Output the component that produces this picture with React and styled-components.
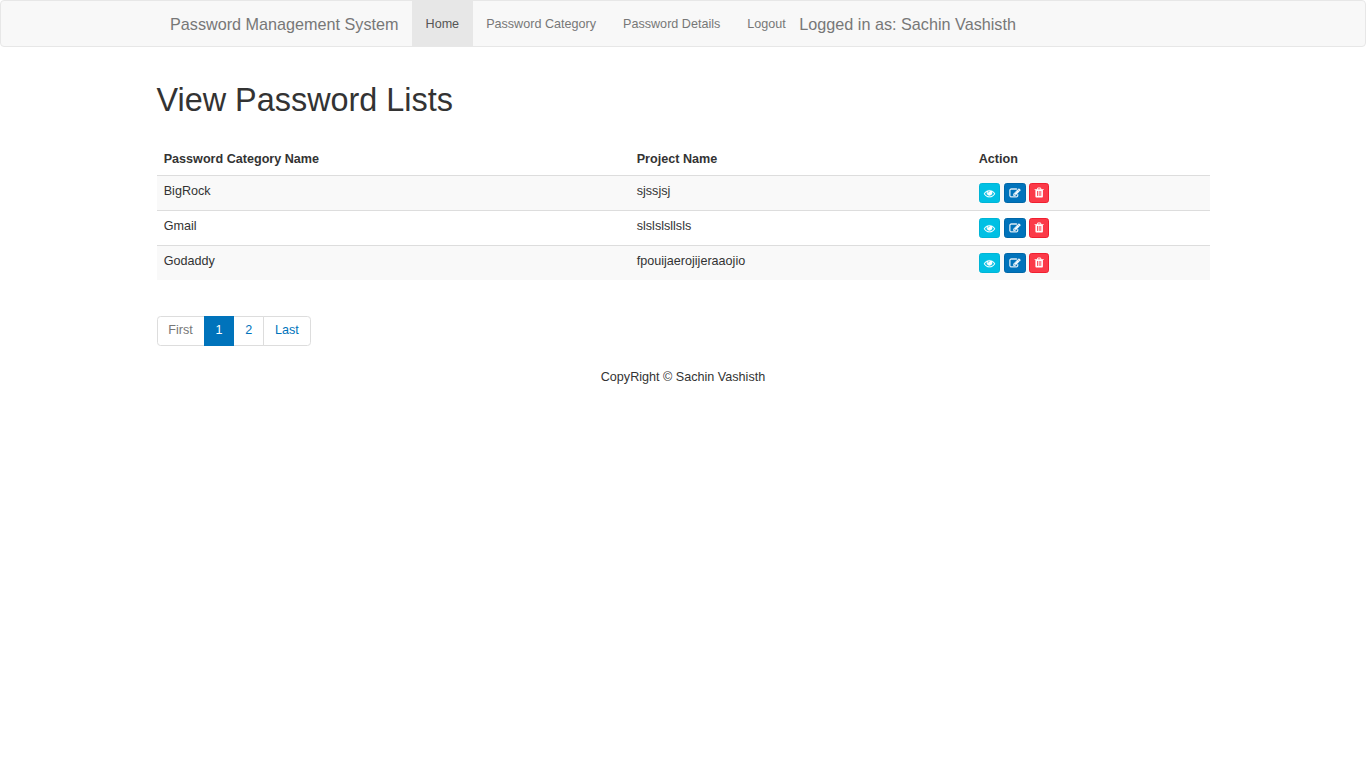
import React from 'react';
import styled, { createGlobalStyle } from 'styled-components';

const GlobalStyle = createGlobalStyle`
  *, *::before, *::after { box-sizing: border-box; }
  body {
    margin: 0;
    background: #fff;
    color: #333;
    font: 12.6px/18px "Liberation Sans", Arial, sans-serif;
  }
`;

const Navbar = styled.nav`
  height: 47px;
  background: #f8f8f8;
  border: 1px solid #e7e7e7;
  border-radius: 4px;
`;

const Container = styled.div`
  width: 1053px;
  margin: 0 auto;
`;

const NavContent = styled(Container)`
  display: flex;
  height: 46px;
`;

const Brand = styled.a`
  padding: 14px 13.5px 0;
  font-size: 16.2px;
  color: #777;
`;

const NavLinks = styled.ul`
  display: flex;
  margin: -1px 0 0;
  padding: 0;
  list-style: none;
`;

const NavLink = styled.a`
  display: block;
  height: 47px;
  padding: 15px 13.5px 0;
  color: ${(p) => (p.$active ? '#555' : '#777')};
  background: ${(p) => (p.$active ? '#e7e7e7' : 'transparent')};
`;

const UserLabel = styled.span`
  padding-top: 14px;
  font-size: 16.2px;
  color: #777;
`;

const Title = styled.h1`
  margin: 35px 0 32px;
  font-size: 32.4px;
  line-height: 36px;
  font-weight: 400;
`;

const Table = styled.table`
  width: 100%;
  table-layout: fixed;
  border-collapse: separate;
  border-spacing: 0;
`;

const HeadCell = styled.th`
  width: ${(p) => p.$width};
  height: 25px;
  padding: 0 7.2px 7px;
  text-align: left;
  font-weight: 700;
`;

const Row = styled.tr`
  &:nth-child(odd) { background: #f9f9f9; }
`;

const Cell = styled.td`
  height: 35px;
  padding: 6px 7.2px 0;
  border-top: 1px solid #ddd;
  vertical-align: top;
`;

const Actions = styled.div`
  display: flex;
  gap: 3.5px;
  padding-top: 1px;
`;

const tones = {
  view: ['#00c0e4', '#00b5d6'],
  edit: ['#0073bb', '#0067a8'],
  remove: ['#fb3a48', '#f01f30'],
};

const ActionButton = styled.button`
  display: flex;
  align-items: center;
  justify-content: center;
  width: ${(p) => p.$width}px;
  height: 20px;
  padding: 0;
  border: 1px solid ${(p) => tones[p.$tone][1]};
  border-radius: 2.7px;
  background: ${(p) => tones[p.$tone][0]};
  color: #fff;
`;

const Icon = styled.svg`
  display: block;
  width: ${(p) => p.$width}px;
  height: ${(p) => p.$height}px;
  fill: currentColor;
  stroke: currentColor;
  stroke-width: ${(p) => p.$stroke};
`;

const Pagination = styled.ul`
  display: flex;
  margin: 36px 0 22px;
  padding: 0;
  list-style: none;
`;

const PageLink = styled.a`
  display: block;
  height: 30px;
  margin-left: -0.9px;
  padding: 4px 10.8px 0;
  border: 1px solid ${(p) => (p.$active ? '#0073bb' : '#ddd')};
  background: ${(p) => (p.$active ? '#0073bb' : '#fff')};
  color: ${(p) => (p.$active ? '#fff' : p.$muted ? '#777' : '#0073bb')};
  position: relative;
  z-index: ${(p) => (p.$active ? 1 : 0)};

  li:first-child > & { margin-left: 0; border-radius: 3.6px 0 0 3.6px; }
  li:last-child > & { border-radius: 0 3.6px 3.6px 0; }
`;

const Footer = styled.footer`
  text-align: center;
`;

const icons = {
  view: {
    box: '0 30 1792 1792',
    width: 11,
    height: 11,
    stroke: 30,
    button: 21.7,
    d: 'M1664 960q-152-236-381-353 61 104 61 225 0 185-131.5 316.5t-316.5 131.5-316.5-131.5-131.5-316.5q0-121 61-225-229 117-381 353 133 205 333.5 326.5t434.5 121.5 434.5-121.5 333.5-326.5zm-720-384q0-20-14-34t-34-14q-125 0-214.5 89.5t-89.5 214.5q0 20 14 34t34 14 34-14 14-34q0-86 61-147t147-61q20 0 34-14t14-34zm848 384q0 34-20 69-140 230-376.5 368.5t-499.5 138.5-499.5-139-376.5-368q-20-35-20-69t20-69q140-229 376.5-368t499.5-139 499.5 139 376.5 368q20 35 20 69z',
  },
  edit: {
    box: '-80 30 1792 1792',
    width: 11,
    height: 11,
    stroke: 50,
    button: 21.7,
    d: 'M888 1184l116-116-152-152-116 116v56h96v96h56zm440-720q-16-16-33 1l-350 350q-17 17-1 33t33-1l350-350q17-17 1-33zm80 594v190q0 119-84.5 203.5t-203.5 84.5h-832q-119 0-203.5-84.5t-84.5-203.5v-832q0-119 84.5-203.5t203.5-84.5h832q63 0 117 25 15 7 18 23 3 17-9 29l-49 49q-14 14-32 8-23-6-45-6h-832q-66 0-113 47t-47 113v832q0 66 47 113t113 47h832q66 0 113-47t47-113v-126q0-13 9-22l64-64q15-15 35-7t20 29zm-96-738l288 288-672 672h-288v-288zm444 132l-92 92-288-288 92-92q28-28 68-28t68 28l152 152q28 28 28 68t-28 68z',
  },
  remove: {
    box: '105 40 1408 1792',
    width: 9.2,
    height: 11.7,
    stroke: 0,
    button: 19.5,
    d: 'M704 1376v-704q0-14-9-23t-23-9h-64q-14 0-23 9t-9 23v704q0 14 9 23t23 9h64q14 0 23-9t9-23zm256 0v-704q0-14-9-23t-23-9h-64q-14 0-23 9t-9 23v704q0 14 9 23t23 9h64q14 0 23-9t9-23zm256 0v-704q0-14-9-23t-23-9h-64q-14 0-23 9t-9 23v704q0 14 9 23t23 9h64q14 0 23-9t9-23zm-544-992h448l-48-117q-7-9-17-11h-317q-10 2-17 11zm928 32v64q0 14-9 23t-23 9h-96v948q0 83-47 143.5t-113 60.5h-832q-66 0-113-58.5t-47-141.5v-952h-96q-14 0-23-9t-9-23v-64q0-14 9-23t23-9h309l70-167q15-37 54-63t79-26h320q40 0 79 26t54 63l70 167h309q14 0 23 9t9 23z',
  },
};

const links = ['Home', 'Password Category', 'Password Details', 'Logout'];

const entries = [
  ['BigRock', 'sjssjsj'],
  ['Gmail', 'slslslsllsls'],
  ['Godaddy', 'fpouijaerojijeraaojio'],
];

function Action({ kind }) {
  const { box, width, height, stroke, button, d } = icons[kind];
  return (
    <ActionButton $tone={kind} $width={button} aria-label={kind}>
      <Icon viewBox={box} $width={width} $height={height} $stroke={stroke} overflow="visible">
        <path d={d} />
      </Icon>
    </ActionButton>
  );
}

export default function App() {
  return (
    <>
      <GlobalStyle />
      <Navbar>
        <NavContent>
          <Brand>Password Management System</Brand>
          <NavLinks>
            {links.map((label, i) => (
              <li key={label}>
                <NavLink $active={i === 0}>{label}</NavLink>
              </li>
            ))}
          </NavLinks>
          <UserLabel>Logged in as: Sachin Vashisth</UserLabel>
        </NavContent>
      </Navbar>
      <Container>
        <Title>View Password Lists</Title>
        <Table>
          <thead>
            <tr>
              <HeadCell $width="473px">Password Category Name</HeadCell>
              <HeadCell $width="342px">Project Name</HeadCell>
              <HeadCell>Action</HeadCell>
            </tr>
          </thead>
          <tbody>
            {entries.map(([category, project]) => (
              <Row key={category}>
                <Cell>{category}</Cell>
                <Cell>{project}</Cell>
                <Cell>
                  <Actions>
                    <Action kind="view" />
                    <Action kind="edit" />
                    <Action kind="remove" />
                  </Actions>
                </Cell>
              </Row>
            ))}
          </tbody>
        </Table>
        <Pagination>
          <li><PageLink $muted>First</PageLink></li>
          <li><PageLink $active>1</PageLink></li>
          <li><PageLink>2</PageLink></li>
          <li><PageLink>Last</PageLink></li>
        </Pagination>
        <Footer>CopyRight © Sachin Vashisth</Footer>
      </Container>
    </>
  );
}
